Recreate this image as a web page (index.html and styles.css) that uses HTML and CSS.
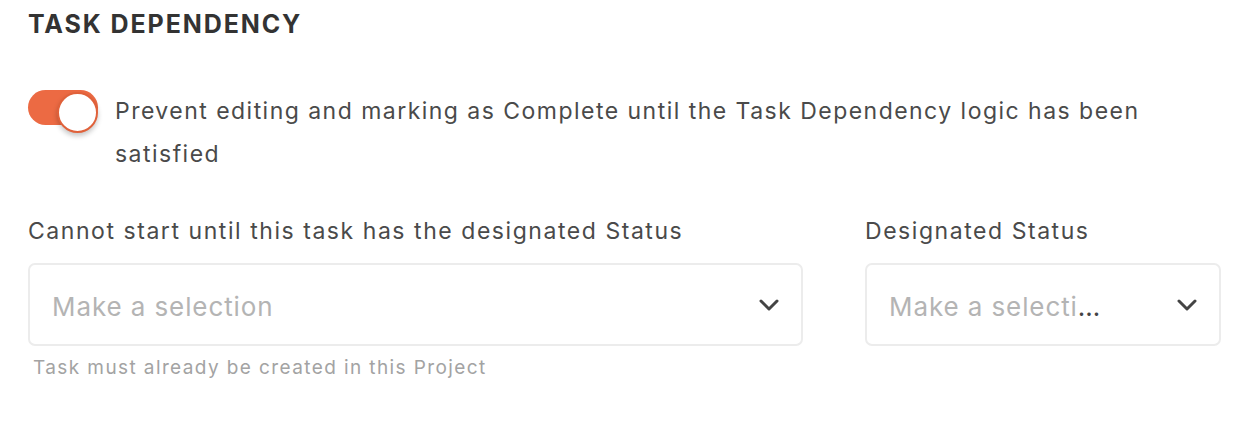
FILE: index.html
```html
<!DOCTYPE html>
<html lang="en">
<head>
<meta charset="utf-8">
<title>Task Dependency</title>
<link rel="stylesheet" href="styles.css">
</head>
<body>
<section class="panel">
  <h2 class="title">TASK DEPENDENCY</h2>
  <div class="toggle-row">
    <span class="toggle" role="switch" aria-checked="true"><span class="knob"></span></span>
    <p class="toggle-text">Prevent editing and marking as Complete until the Task Dependency logic has been satisfied</p>
  </div>
  <div class="fields">
    <div class="field field-task">
      <label class="label">Cannot start until this task has the designated Status</label>
      <div class="select">
        <span class="value"><span class="placeholder">Make a selection</span></span>
        <svg class="chev" width="20" height="12" viewBox="0 0 20 12"><path d="M2 2 L10 10 L18 2" fill="none" stroke="#444" stroke-width="3" stroke-linecap="round" stroke-linejoin="round"/></svg>
      </div>
      <div class="hint">Task must already be created in this Project</div>
    </div>
    <div class="field field-status">
      <label class="label">Designated Status</label>
      <div class="select">
        <span class="value"><span class="placeholder">Make a selection</span></span>
        <svg class="chev" width="20" height="12" viewBox="0 0 20 12"><path d="M2 2 L10 10 L18 2" fill="none" stroke="#444" stroke-width="3" stroke-linecap="round" stroke-linejoin="round"/></svg>
      </div>
    </div>
  </div>
</section>
</body>
</html>
```
FILE: styles.css
```css
* { box-sizing: border-box; }
html, body { margin: 0; padding: 0; background: #fff; }
body {
  font-family: Inter, "Noto Sans", sans-serif;
  color: #4a4a4a;
}
.panel {
  padding: 9px 0 0 28px;
}
.title {
  margin: 0;
  font-size: 25px;
  line-height: 30px;
  font-weight: 700;
  color: #333;
  letter-spacing: 1.9px;
}
.toggle-row {
  margin-top: 51px;
  display: flex;
  align-items: flex-start;
  gap: 17px;
  width: 1150px;
}
.toggle {
  position: relative;
  flex: none;
  width: 70px;
  height: 35px;
  border-radius: 18px;
  background: #ec6a43;
}
.knob {
  position: absolute;
  right: 0;
  top: 2px;
  width: 41px;
  height: 41px;
  border-radius: 50%;
  background: #fff;
  border: 2px solid #e0613a;
  box-shadow: 0 3px 5px rgba(0,0,0,0.22);
}
.toggle-text {
  margin: 0;
  font-size: 23px;
  line-height: 43px;
  letter-spacing: 1.47px;
  color: #4a4a4a;
}
.fields {
  margin-top: 42px;
  display: flex;
  gap: 62px;
}
.field-task { width: 775px; }
.field-status { width: 356px; }
.label {
  display: block;
  font-size: 23px;
  line-height: 27px;
  letter-spacing: 1.55px;
  color: #4a4a4a;
}
.select {
  margin-top: 18px;
  height: 83px;
  border: 2px solid #ececec;
  border-radius: 7px;
  display: flex;
  align-items: center;
  padding: 0 22px 0 22px;
  gap: 76px;
}
.value {
  flex: 1;
  min-width: 0;
  margin-top: 4px;
  white-space: nowrap;
  overflow: hidden;
  text-overflow: ellipsis;
  font-size: 26px;
  letter-spacing: 0.9px;
  color: #444;
}
.placeholder { color: #b4b4b4; }
.chev { flex: none; margin-top: 1px; }
.hint {
  margin-top: 11px;
  padding-left: 5px;
  font-size: 19px;
  line-height: 22px;
  letter-spacing: 1.4px;
  color: #a3a3a3;
}
```
